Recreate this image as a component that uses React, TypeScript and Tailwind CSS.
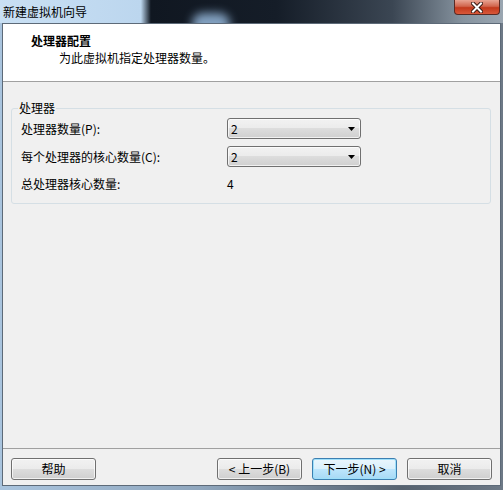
import React from 'react';

const font = "font-['Noto_Sans_CJK_SC','Noto_Sans',sans-serif]";

const ComboBox = ({ value }: { value: string }) => (
  <div className="w-[134px] h-[21px] flex items-center justify-between pl-[3px] pr-[5px] border border-[#707070] rounded-[3px] bg-[linear-gradient(to_bottom,#f2f2f2_0%,#ebebeb_50%,#dddddd_50%,#cfcfcf_100%)] shadow-[inset_0_0_0_1px_rgba(255,255,255,0.7)]">
    <span className="text-[12px] leading-[16px] text-black">{value}</span>
    <svg width="7" height="4" viewBox="0 0 7 4">
      <path d="M0 0H7L3.5 4Z" fill="#000" />
    </svg>
  </div>
);

const DialogButton = ({ label, primary }: { label: string; primary?: boolean }) => (
  <button
    type="button"
    className={
      primary
        ? 'w-[85px] h-[22px] rounded-[3px] border border-[#3c7fb1] bg-[linear-gradient(to_bottom,#eaf6fd_0%,#d9f0fc_50%,#bee6fd_50%,#a7d9f5_100%)] shadow-[inset_0_0_0_1px_#9ee0fb] text-[12px] leading-[16px] text-black'
        : 'w-[85px] h-[22px] rounded-[3px] border border-[#707070] bg-[linear-gradient(to_bottom,#f2f2f2_0%,#ebebeb_50%,#dddddd_50%,#cfcfcf_100%)] shadow-[inset_0_0_0_1px_rgba(255,255,255,0.7)] text-[12px] leading-[16px] text-black'
    }
  >
    {label}
  </button>
);

export default function App() {
  return (
    <div className={`w-[503px] h-[490px] flex flex-col overflow-hidden bg-[#8ea3b8] ${font}`}>
      {/* Title bar */}
      <div className="relative overflow-hidden h-[23px] flex items-center pl-[3px] bg-[linear-gradient(to_right,#c9e0f4_0%,#bcd6ee_28%,#101721_30%,#151d28_55%,#3b4653_78%,#86939f_92%,#9aa6b1_100%)]">
        <div className="absolute left-[192px] top-[13px] w-[38px] h-[22px] rounded-full bg-[#8fb0d2] blur-[5px] opacity-90" />
        <span className="relative text-[12px] leading-[16px] text-black">新建虚拟机向导</span>
        <div className="absolute right-[3px] top-0 w-[46px] h-[15px] rounded-b-[4px] border border-t-0 border-[#5a2a24] bg-[linear-gradient(to_bottom,#e8a493_0%,#d1654d_45%,#c2391c_55%,#d9583a_100%)] flex items-center justify-center">
          <svg width="12" height="11" viewBox="0 0 12 11">
            <path d="M2 1.5L10 9.5M10 1.5L2 9.5" stroke="#3a1a14" strokeWidth="4" strokeLinecap="square" />
            <path d="M2 1.5L10 9.5M10 1.5L2 9.5" stroke="#ffffff" strokeWidth="2" strokeLinecap="square" />
          </svg>
        </div>
      </div>

      {/* Frame + client */}
      <div className="flex-1 flex pl-[2px] pr-[2px] pb-[4px] bg-[linear-gradient(to_right,#a9c4de_0%,#8fa6bd_40%,#56626f_80%,#6d7986_100%)]">
        <div className="flex-1 flex flex-col border border-[#5d6a78] bg-[#f0f0f0]">
          {/* Header */}
          <div className="h-[58px] bg-white border-b border-[#a0a0a0] pt-[9px]">
            <div className="pl-[28px] text-[12px] leading-[16px] font-bold text-black">处理器配置</div>
            <div className="pl-[56px] mt-[1px] text-[12px] leading-[16px] text-black">为此虚拟机指定处理器数量。</div>
          </div>

          {/* Body */}
          <div className="flex-1 pt-[26px] pl-[8px] pr-[9px]">
            <div className="relative border border-[#d5dfe5] rounded-[3px] pt-[9px] pb-[11px] pl-[9px]">
              <span className="absolute left-[6px] top-[-9px] px-[1px] bg-[#f0f0f0] text-[12px] leading-[16px] text-black">处理器</span>
              <div className="flex flex-col gap-[7px]">
                <div className="flex items-center">
                  <span className="w-[206px] text-[12px] leading-[16px] text-black">处理器数量(P):</span>
                  <ComboBox value="2" />
                </div>
                <div className="flex items-center">
                  <span className="w-[206px] text-[12px] leading-[16px] text-black">每个处理器的核心数量(C):</span>
                  <ComboBox value="2" />
                </div>
                <div className="flex items-center mt-[2px]">
                  <span className="w-[206px] text-[12px] leading-[16px] text-black">总处理器核心数量:</span>
                  <span className="text-[12px] leading-[16px] text-black">4</span>
                </div>
              </div>
            </div>
          </div>

          {/* Footer */}
          <div className="border-t border-[#a0a0a0] pt-[9px] pb-[5px] px-[8px] flex items-center">
            <DialogButton label="帮助" />
            <div className="flex-1" />
            <div className="flex gap-[10px]">
              <DialogButton label="< 上一步(B)" />
              <DialogButton label="下一步(N) >" primary />
              <DialogButton label="取消" />
            </div>
          </div>
        </div>
      </div>
    </div>
  );
}
